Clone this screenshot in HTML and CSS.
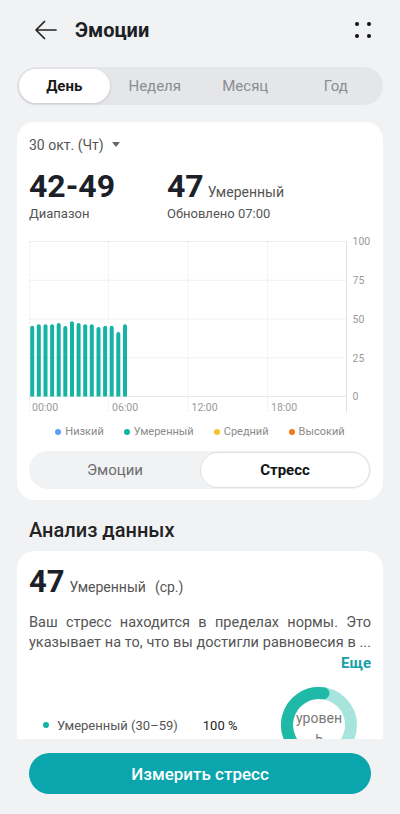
FILE: index.html
```html
<!DOCTYPE html>
<html lang="ru">
<head>
  <meta charset="UTF-8">
  <title>Эмоции</title>
  <link rel="stylesheet" href="styles.css">
</head>
<body>
  <div class="screen">
    <main class="scroll">
      <header class="topbar">
        <svg class="icon" width="24" height="24" viewBox="0 0 24 24">
          <path d="M23 12H3.5M11.5 3.5L3 12l8.5 8.5" fill="none" stroke="#222" stroke-width="1.7" stroke-linecap="round" stroke-linejoin="round"/>
        </svg>
        <h1>Эмоции</h1>
        <svg class="icon more" width="24" height="24" viewBox="0 0 24 24">
          <circle cx="6" cy="6" r="2" fill="#111"/>
          <circle cx="18" cy="6" r="2" fill="#111"/>
          <circle cx="6" cy="18" r="2" fill="#111"/>
          <circle cx="18" cy="18" r="2" fill="#111"/>
        </svg>
      </header>

      <nav class="periods">
        <span class="period active">День</span>
        <span class="period">Неделя</span>
        <span class="period">Месяц</span>
        <span class="period">Год</span>
      </nav>

      <section class="card summary">
        <div class="date">30 окт. (Чт)
          <svg width="8" height="6" viewBox="0 0 8 6"><path d="M0 0h8L4 5z" fill="#666"/></svg>
        </div>
        <div class="stats">
          <div>
            <div class="big">42-49</div>
            <div class="sub">Диапазон</div>
          </div>
          <div>
            <div class="big">47<span class="level">Умеренный</span></div>
            <div class="sub">Обновлено 07:00</div>
          </div>
        </div>

        <svg class="chart" width="342" height="180" viewBox="0 0 342 180">
          <!-- grid -->
          <g stroke="#f0f0f0" stroke-width="1">
            <line x1="0" y1="8.5" x2="318" y2="8.5"/>
            <line x1="0" y1="47.25" x2="318" y2="47.25"/>
            <line x1="0" y1="86" x2="318" y2="86"/>
            <line x1="0" y1="124.75" x2="318" y2="124.75"/>
          </g>
          <line x1="0" y1="163.5" x2="318" y2="163.5" stroke="#e6e6e6"/>
          <g stroke="#e8e8e8" stroke-width="1" stroke-dasharray="2 2">
            <line x1="0.5" y1="8.5" x2="0.5" y2="180"/>
            <line x1="79.5" y1="8.5" x2="79.5" y2="180"/>
            <line x1="159" y1="8.5" x2="159" y2="180"/>
            <line x1="238.5" y1="8.5" x2="238.5" y2="180"/>
          </g>
          <line x1="317.5" y1="8.5" x2="317.5" y2="180" stroke="#e2e2e2"/>

          <!-- bars, half-hour steps -->
          <g fill="#14b3a3">
            <path d="M1.2 163.5V94.7a2 2 0 0 1 4 0V163.5z"/>
            <path d="M7.8 163.5V93.3a2 2 0 0 1 4 0V163.5z"/>
            <path d="M14.5 163.5V93.3a2 2 0 0 1 4 0V163.5z"/>
            <path d="M21.1 163.5V93.3a2 2 0 0 1 4 0V163.5z"/>
            <path d="M27.7 163.5V92a2 2 0 0 1 4 0V163.5z"/>
            <path d="M34.3 163.5V95a2 2 0 0 1 4 0V163.5z"/>
            <path d="M41 163.5V90.3a2 2 0 0 1 4 0V163.5z"/>
            <path d="M47.6 163.5V92a2 2 0 0 1 4 0V163.5z"/>
            <path d="M54.2 163.5V93.3a2 2 0 0 1 4 0V163.5z"/>
            <path d="M60.8 163.5V93.3a2 2 0 0 1 4 0V163.5z"/>
            <path d="M67.5 163.5V96a2 2 0 0 1 4 0V163.5z"/>
            <path d="M74.1 163.5V94.7a2 2 0 0 1 4 0V163.5z"/>
            <path d="M80.7 163.5V94.7a2 2 0 0 1 4 0V163.5z"/>
            <path d="M87.3 163.5V101a2 2 0 0 1 4 0V163.5z"/>
            <path d="M94 163.5V93.3a2 2 0 0 1 4 0V163.5z"/>
          </g>

          <g class="axis">
            <text x="323.5" y="12.3">100</text>
            <text x="323.5" y="51">75</text>
            <text x="323.5" y="89.8">50</text>
            <text x="323.5" y="128.5">25</text>
            <text x="323.5" y="167.3">0</text>
            <text x="3" y="177.5">00:00</text>
            <text x="83" y="177.5">06:00</text>
            <text x="162.5" y="177.5">12:00</text>
            <text x="242" y="177.5">18:00</text>
          </g>
        </svg>

        <ul class="legend">
          <li><i class="dot low"></i>Низкий</li>
          <li><i class="dot mid"></i>Умеренный</li>
          <li><i class="dot avg"></i>Средний</li>
          <li><i class="dot high"></i>Высокий</li>
        </ul>

        <div class="toggle">
          <span class="toggle-item">Эмоции</span>
          <span class="toggle-item active">Стресс</span>
        </div>
      </section>

      <h2 class="section-title">Анализ данных</h2>

      <section class="card analysis">
        <div class="big">47<span class="level">Умеренный</span><span class="avg-note">(ср.)</span></div>
        <p class="text">Ваш стресс находится в пределах нормы. Это указывает на то, что вы достигли равновесия в ...</p>
        <div class="more-link">Еще</div>
        <div class="share">
          <span class="share-label"><i class="dot mid"></i>Умеренный (30–59)</span>
          <span class="share-value">100 %</span>
          <svg class="donut" width="76" height="76" viewBox="0 0 76 76">
            <circle cx="38" cy="38" r="32" fill="none" stroke="#a6e4dc" stroke-width="12"/>
            <path d="M27.06 68.07A32 32 0 0 1 42.46 6.31" fill="none" stroke="#1fb9a8" stroke-width="12" stroke-linecap="round"/>
            <text x="38" y="36" text-anchor="middle">уровен</text>
            <text x="38" y="55" text-anchor="middle">ь</text>
          </svg>
        </div>
      </section>
    </main>

    <footer class="bottom">
      <button class="measure">Измерить стресс</button>
    </footer>
  </div>
</body>
</html>
```

FILE: styles.css
```css
* {
  box-sizing: border-box;
}
body {
  margin: 0;
  font-family: Roboto, "Noto Sans", sans-serif;
  background: #f1f2f4;
  color: #1c1f24;
}
.screen {
  width: 400px;
  height: 814px;
  display: flex;
  flex-direction: column;
}
.scroll {
  height: 739px;
  overflow: hidden;
  padding: 0 17px;
}

/* top bar */
.topbar {
  height: 60px;
  display: flex;
  align-items: center;
  padding: 0 8px 0 16px;
}
.topbar .icon {
  display: block;
}
.topbar h1 {
  margin: 0 0 0 18px;
  font-size: 20px;
  font-weight: 700;
  flex: 1;
}

/* period tabs */
.periods {
  margin-top: 7px;
  height: 38px;
  padding: 2px;
  border-radius: 19px;
  background: #e4e6e9;
  display: grid;
  grid-template-columns: repeat(4, 1fr);
}
.period {
  display: flex;
  align-items: center;
  justify-content: center;
  font-size: 15px;
  color: #8b8d90;
  border-radius: 17px;
}
.period.active {
  background: #fff;
  color: #1a1a1a;
  font-weight: 700;
  box-shadow: 0 1px 3px rgba(0, 0, 0, 0.14);
}

.card {
  background: #fff;
  border-radius: 18px;
}
.summary {
  margin-top: 17px;
  padding: 13px 12px 11px;
}
.date {
  font-size: 14px;
  line-height: 20px;
  color: #555;
}
.date svg {
  margin-left: 5px;
  vertical-align: 2px;
}
.stats {
  margin-top: 14px;
  display: grid;
  grid-template-columns: 138px 1fr;
}
.big {
  font-size: 32px;
  line-height: 34px;
  font-weight: 700;
  color: #1b2029;
}
.level {
  margin-left: 4px;
  font-size: 14px;
  line-height: 1;
  font-weight: 400;
  color: #555;
}
.sub {
  margin-top: 2px;
  font-size: 13px;
  line-height: 18px;
  color: #555;
}

.chart {
  display: block;
  margin-top: 10px;
}
.axis text {
  font-size: 10.5px;
  fill: #9a9a9a;
}

.legend {
  list-style: none;
  margin: 12px 0 0;
  padding: 0;
  display: flex;
  justify-content: center;
  gap: 20px;
  font-size: 11px;
  line-height: 14px;
  color: #8a8a8a;
}
.legend li {
  display: flex;
  align-items: center;
}
.dot {
  width: 6px;
  height: 6px;
  border-radius: 50%;
  margin-right: 4px;
  display: inline-block;
}
.dot.low { background: #5b9ef2; }
.dot.mid { background: #15b3a3; }
.dot.avg { background: #f6c22e; }
.dot.high { background: #f07a1e; }

.toggle {
  margin-top: 12px;
  height: 38px;
  border-radius: 19px;
  background: #f1f2f3;
  display: grid;
  grid-template-columns: 1fr 1fr;
  padding: 1px;
}
.toggle-item {
  display: flex;
  align-items: center;
  justify-content: center;
  font-size: 15px;
  color: #6b6d70;
  border-radius: 18px;
}
.toggle-item.active {
  background: #fff;
  border: 1px solid #e0e0e0;
  color: #111;
  font-weight: 700;
}

.section-title {
  margin: 18px 0 9px;
  padding-left: 12px;
  font-size: 20px;
  line-height: 24px;
  font-weight: 500;
  color: #222;
}

.analysis {
  padding: 14px 12px 20px;
}
.analysis .big {
  font-size: 31px;
}
.analysis .level {
  margin-left: 5px;
}
.avg-note {
  margin-left: 9px;
  font-size: 14px;
  line-height: 1;
  font-weight: 400;
  color: #555;
}
.text {
  margin: 14px 0 0;
  font-size: 14.5px;
  line-height: 20px;
  color: #555;
  text-align: justify;
  text-align-last: justify;
}
.more-link {
  text-align: right;
  font-size: 15px;
  line-height: 20px;
  font-weight: 700;
  color: #17a0a7;
}
.share {
  margin-top: 14px;
  height: 76px;
  display: flex;
  align-items: center;
  padding-left: 14px;
  padding-right: 14px;
  font-size: 13px;
}
.share-label {
  display: flex;
  align-items: center;
  color: #555;
  white-space: nowrap;
}
.share-label .dot {
  margin-right: 8px;
}
.share-value {
  margin-left: 25px;
  color: #222;
  flex: 1;
}
.donut text {
  font-size: 14px;
  fill: #777;
}

/* bottom action */
.bottom {
  flex: 1;
  padding: 14px 29px 0;
}
.measure {
  width: 100%;
  height: 41px;
  border: none;
  border-radius: 21px;
  background: #0ba6ad;
  color: #fff;
  font-family: Roboto, "Noto Sans", sans-serif;
  font-size: 17px;
  font-weight: 500;
}
```
